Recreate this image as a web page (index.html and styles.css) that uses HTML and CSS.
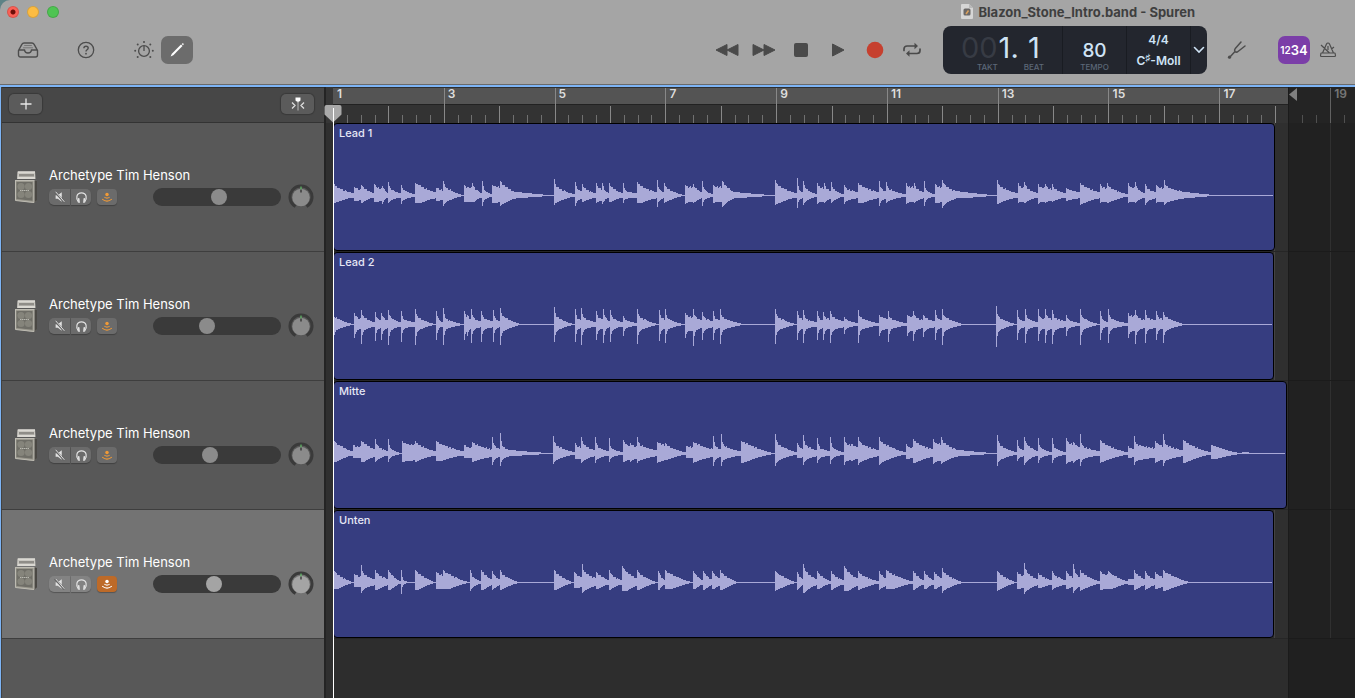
FILE: index.html
```html
<!DOCTYPE html>
<html lang="de">
<head>
<meta charset="utf-8">
<title>Blazon_Stone_Intro.band - Spuren</title>
<link rel="stylesheet" href="styles.css">
</head>
<body>
<svg class="defs" aria-hidden="true">
  <defs>
    <symbol id="amp" viewBox="0 0 24 34">
      <path d="M3.500 1.500h17.500l.5 7.500H3z" fill="#c9c7c1"/>
      <path d="M5 4h15v2.500H5z" fill="#8f8d88"/>
      <path d="M4 2h17M4 8h17" stroke="#eceae4" stroke-width="1"/>
      <path d="M1 10.500l18.500-.5 3.500 1v19.500L20 33 1 30.500z" fill="#9b998f"/>
      <path d="M20 10l3 1v19.500L20 33z" fill="#4a4844"/>
      <path d="M2.500 12h16v18.800l-16-1.800z" fill="#6f6e67"/>
      <circle cx="7" cy="16.500" r="3.600" fill="#85847b"/><circle cx="14.500" cy="16.500" r="3.600" fill="#85847b"/>
      <circle cx="7" cy="24.500" r="3.600" fill="#85847b"/><circle cx="14.500" cy="24.500" r="3.600" fill="#85847b"/>
      <path d="M6 20.500h9" stroke="#b9b8b0" stroke-width="1.200" stroke-dasharray="1.500 .5"/>
      <path d="M1 10.500h19.500M1.500 10v20.500l18.500 2V10.500" fill="none" stroke="#bdbbb2" stroke-width="1"/>
    </symbol>
    <symbol id="mute" viewBox="0 0 16 16">
      <path d="M3 6h2.500L10 2.500v11L5.500 10H3z" fill="#e2e2e2"/>
      <path d="M2 2l11 12" stroke="#666" stroke-width="2.200"/>
      <path d="M3 2l10 11.500" stroke="#e2e2e2" stroke-width="1.100"/>
    </symbol>
    <symbol id="phones" viewBox="0 0 16 16">
      <path d="M4.700 13C1.500 9 2.600 3 8 3s6.500 6 3.300 10" fill="none" stroke="#e2e2e2" stroke-width="1.300"/>
      <path d="M4 8.500l1.800.3.500 4.700-1.600.3zM12 8.500l-1.800.3-.5 4.700 1.600.3z" fill="#e2e2e2"/>
    </symbol>
    <symbol id="monitor" viewBox="0 0 16 16">
      <circle cx="8" cy="5" r="2" fill="currentColor"/>
      <path d="M5 8.200q3 2.200 6 0M2.500 10.500q5.500 4.500 11 0" fill="none" stroke="currentColor" stroke-width="1.200"/>
    </symbol>
    <symbol id="pan" viewBox="0 0 26 26">
      <path d="M7.500 22.500a11 11 0 1 1 11 0" fill="none" stroke="#3a3a3a" stroke-width="3"/>
      <circle cx="13" cy="13.500" r="8.700" fill="currentColor"/>
      <path d="M13 2.500v3" stroke="#62d36b" stroke-width="1"/>
      <path d="M13 5.500v3" stroke="#111" stroke-width="1"/>
    </symbol>
  </defs>
</svg>
<div class="window">
  <header class="top">
    <div class="titlebar">
      <div class="lights">
        <button class="light red" aria-label="Schließen"></button>
        <button class="light yellow" aria-label="Minimieren"></button>
        <button class="light green" aria-label="Vollbild"></button>
      </div>
      <h1 class="title">
        <svg width="12" height="15" viewBox="0 0 12 15"><path d="M1 0h7l4 4v10a1 1 0 0 1-1 1H1a1 1 0 0 1-1-1V1a1 1 0 0 1 1-1z" fill="#d6d6d6"/><path d="M8 0v4h4z" fill="#b9b9b9"/><rect x="2.500" y="4.500" width="7" height="7" rx="1.500" fill="#6b6867"/><path d="M5 10l2.500-3.500" stroke="#d9a05c" stroke-width="1.600"/></svg>
        <span>Blazon_Stone_Intro.band - Spuren</span>
      </h1>
    </div>
    <div class="toolbar">
      <div class="tools">
        <button class="tool library" aria-label="Bibliothek"><svg width="22" height="18" viewBox="0 0 22 18"><path d="M1.500 9.500L5 3.200Q5.600 2 7 2h8q1.400 0 2 1.200l3.500 6.300V14a2 2 0 0 1-2 2h-15a2 2 0 0 1-2-2zM2 9h5.500q.3 3 3.500 3t3.500-3H20" fill="none" stroke="#4d4d4d" stroke-width="1.400"/><path d="M7.200 4.500h7.600M6 6.800h10" stroke="#777" stroke-width="1"/></svg></button>
        <button class="tool help" aria-label="Hilfe"><svg width="18" height="18" viewBox="0 0 18 18"><circle cx="9" cy="9" r="7.700" fill="none" stroke="#4d4d4d" stroke-width="1.300"/><path d="M6.900 7.200c0-2.700 4.300-2.600 4.300-.1 0 1.700-2.200 1.600-2.200 3.300" fill="none" stroke="#4d4d4d" stroke-width="1.400"/><circle cx="9" cy="12.700" r=".9" fill="#4d4d4d"/></svg></button>
        <button class="tool smart" aria-label="Smart Controls"><svg width="20" height="20" viewBox="0 0 20 20"><circle cx="10" cy="11" r="5.400" fill="none" stroke="#4d4d4d" stroke-width="1.300"/><path d="M10 6v5" stroke="#4d4d4d" stroke-width="1.300"/><g fill="#4d4d4d"><circle cx="10" cy="2" r="1"/><circle cx="3.700" cy="4.500" r="1"/><circle cx="16.300" cy="4.500" r="1"/><circle cx="1.200" cy="10.700" r="1"/><circle cx="18.800" cy="10.700" r="1"/><circle cx="3.700" cy="17" r="1"/><circle cx="16.300" cy="17" r="1"/></g></svg></button>
        <button class="tool active" aria-label="Editoren"><svg width="16" height="16" viewBox="0 0 16 16"><path d="M1.600 14.400l1.200-2.600L12 2.600l1.500 1.500-9.200 9.200z" fill="#fff"/><path d="M12.700 1.900l.5-.5q.6-.5 1.200.1t.1 1.200l-.5.500z" fill="#fff"/></svg></button>
      </div>
      <div class="transport">
        <button class="tool" aria-label="Zurückspulen"><svg width="24" height="14" viewBox="0 0 24 14"><path d="M1 7L12 1.500v11zM12 7L23 1.500v11z" fill="#4a4a4a" stroke="#4a4a4a" stroke-linejoin="round"/></svg></button>
        <button class="tool" aria-label="Vorspulen"><svg width="24" height="14" viewBox="0 0 24 14"><path d="M23 7L12 1.500v11zM12 7L1 1.500v11z" fill="#4a4a4a" stroke="#4a4a4a" stroke-linejoin="round"/></svg></button>
        <button class="tool" aria-label="Stopp"><svg width="14" height="14" viewBox="0 0 14 14"><rect width="14" height="14" rx="2" fill="#4a4a4a"/></svg></button>
        <button class="tool" aria-label="Wiedergabe"><svg width="14" height="14" viewBox="0 0 14 14"><path d="M1.500 1v12L13 7z" fill="#4a4a4a" stroke="#4a4a4a" stroke-linejoin="round"/></svg></button>
        <button class="tool" aria-label="Aufnahme"><svg width="18" height="18" viewBox="0 0 18 18"><circle cx="9" cy="9" r="8.300" fill="#c6402f"/></svg></button>
        <button class="tool" aria-label="Cycle"><svg width="20" height="16" viewBox="0 0 20 16"><path d="M2 8.500V7a3 3 0 0 1 3-3h8M18 7v1.500a3 3 0 0 1-3 3H7" fill="none" stroke="#4a4a4a" stroke-width="1.700" stroke-linecap="round"/><path d="M12.500.8v6.400L16 4zM7.500 8.300v6.400L4 11.500z" fill="#4a4a4a"/></svg></button>
      </div>
      <div class="lcd">
        <div class="position">
          <div class="pos"><span class="digits"><span class="dim">00</span>1.</span><span class="cap takt">TAKT</span></div>
          <div class="pos"><span class="digits">1</span><span class="cap">BEAT</span></div>
        </div>
        <div class="tempo"><span class="bpm">80</span><span class="cap">TEMPO</span></div>
        <div class="sig"><span>4/4</span><span>C<sup>♯</sup>-Moll</span></div>
        <button class="more" aria-label="Anzeigemodus"><svg width="12" height="8" viewBox="0 0 12 8"><path d="M1.500 1.500L6 6l4.500-4.500" fill="none" stroke="#cfe3f5" stroke-width="1.600" stroke-linecap="round"/></svg></button>
      </div>
      <div class="extras">
        <button class="tool tuner" aria-label="Stimmgerät"><svg width="20" height="20" viewBox="0 0 20 20"><path d="M2.500 17.500l5.500-6M8 11.500q-1-1.500.3-3L14 2M8 11.500q1.500 1.300 3 0L18 6" fill="none" stroke="#4d4d4d" stroke-width="1.500" stroke-linecap="round"/><circle cx="2.500" cy="17.200" r="1.600" fill="#4d4d4d"/></svg></button>
        <button class="tool countin" aria-label="Einzähler"><small>12</small><span>34</span></button>
        <button class="tool" aria-label="Metronom"><svg width="18" height="18" viewBox="0 0 18 18"><path d="M3.500 12L7.500 3q.5-1 1.500-1t1.500 1l4 9M2 12h14l.5 2.500a1 1 0 0 1-1 1h-13a1 1 0 0 1-1-1zM9 5v4M2 4l8.500 8M12.500 8L15 6" fill="none" stroke="#4d4d4d" stroke-width="1.200" stroke-linejoin="round"/></svg></button>
      </div>
    </div>
  </header>
  <main class="tracks">
    <section class="headers" aria-label="Spuren">
      <div class="headbar">
        <button class="small" aria-label="Spur hinzufügen"><svg width="12" height="12" viewBox="0 0 12 12"><path d="M6 .5v11M.5 6h11" stroke="#e8e8e8" stroke-width="1.300"/></svg></button>
        <button class="small" aria-label="Catch"><svg width="14" height="14" viewBox="0 0 14 14"><path d="M4.500.5h5v3L7 5.500l-2.500-2z" fill="#fff"/><path d="M7 4v9.500" stroke="#bbb" stroke-width="1"/><path d="M1 5.500L4 8.500l-3 3M13 5.500L10 8.500l3 3" fill="none" stroke="#ddd" stroke-width="1.300"/></svg></button>
      </div>
      <div id="track-headers"></div>
    </section>
    <div class="gutter"><div class="gutter-ruler"></div></div>
    <section class="timeline" aria-label="Arrangement">
      <div class="ruler">
        <div class="cycle"></div>
        <svg class="ticks" id="ticks" width="1200" height="36" shape-rendering="crispEdges"></svg>
        <div class="bars"><span>1</span><span>3</span><span>5</span><span>7</span><span>9</span><span>11</span><span>13</span><span>15</span><span>17</span><span class="off">19</span></div>
      </div>
      <div class="lanes" id="lanes"></div>
      <div class="after"><svg width="9" height="13" viewBox="0 0 9 13"><path d="M8 0v13L0 6.500z" fill="#808080"/></svg></div>
    </section>
    <div class="playhead">
      <svg width="18" height="18" viewBox="0 0 18 18"><path d="M2.500 0h13Q17.500 0 17.500 2v7.500L9 17.500.5 9.500V2q0-2 2-2z" fill="#a9a9a9"/></svg>
      <div class="needle"></div>
    </div>
  </main>
</div>
<script src="app.js"></script>
</body>
</html>
```

FILE: styles.css
```css
* { box-sizing: border-box; }
html, body { height: 100%; }
body { margin: 0; background: #5d8286; font-family: Inter, "Liberation Sans", sans-serif; overflow: hidden; }
button { border: 0; padding: 0; margin: 0; background: none; font: inherit; color: inherit; display: flex; align-items: center; justify-content: center; }
svg { display: block; flex: none; }
.defs { position: absolute; width: 0; height: 0; }

.window { height: 100%; display: flex; flex-direction: column; background: #a5a5a5; border-radius: 10px 0 0 0; overflow: hidden; }
.top { border-bottom: 1px solid #6a6a6a; height: 85px; flex: none; }
.titlebar { display: flex; justify-content: space-between; align-items: center; height: 23px; padding: 0 160px 0 7px; }
.lights { display: flex; gap: 8px; padding-top: 1px; }
.light { width: 12px; height: 12px; border-radius: 50%; border: 1px solid #0002; }
.red { background: radial-gradient(circle, #6e0f08 2px, #fb6157 3px); }
.yellow { background: #fcbc43; }
.green { background: #4fc453; }
.title { margin: 0; display: flex; align-items: center; gap: 6px; font-size: 13px; font-weight: 700; color: #3f3f3f; }

.toolbar { display: flex; align-items: center; padding: 3px 11px 0 12px; }
.tools, .transport, .extras { display: flex; align-items: center; }
.tool { width: 32px; height: 28px; border-radius: 7px; flex: none; }
.library { margin-right: 26px; }
.help { margin-right: 26px; }
.smart { margin-right: 1px; }
.active { background: #6c6c6c; }
.transport { margin-left: auto; gap: 1px; margin-right: 13px; }
.transport .tool { width: 36px; }
.extras { margin-left: 14px; }
.tuner { margin-right: 25px; }
.countin { background: #7b3ea8; color: #fff; font-size: 13px; font-weight: 600; margin-right: 2px; }
.countin small { font-size: 10px; }

.lcd { display: grid; grid-template-columns: 119px 64px 64px 17px; height: 48px; border-radius: 8px; background: #23262e; color: #cfe3f5; overflow: hidden; }
.lcd > * + * { border-left: 1px solid #191c22; }
.position { display: flex; gap: 5px; padding: 7px 0 0 18px; }
.pos { display: flex; flex-direction: column; align-items: center; }
.digits { font-size: 29px; line-height: 30px; }
.dim { color: #373b44; margin-right: 1px; }
.cap { font-size: 8px; line-height: 8px; color: #5c6878; font-weight: 500; }
.takt { margin-left: -5px; }
.tempo { display: flex; flex-direction: column; align-items: center; padding-top: 13px; }
.bpm { font-size: 19px; line-height: 24px; font-weight: 500; }
.sig { display: flex; flex-direction: column; align-items: center; font-size: 12px; line-height: 14px; font-weight: 600; gap: 7px; padding-top: 7px; white-space: nowrap; }
.sig sup { font-size: 10px; line-height: 1px; vertical-align: 4px; }

.tracks { position: relative; flex: 1; min-height: 0; display: grid; grid-template-columns: 323px 9px 1fr; border-top: 2px solid #7db4f5; border-left: 1px solid #7db4f5; background: #2d2d2d; }
.headers { background: #585858; border-left: 1px solid #414141; overflow: hidden; }
.headbar { height: 36px; background: #474747; border-bottom: 1px solid #333; border-top: 1px solid #2f2f2f; display: flex; justify-content: space-between; padding: 6px 10px 0 7px; }
.small { width: 33px; height: 20px; border-radius: 5px; background: #5b5b5b; box-shadow: 0 0 1px 1px #0003; }

.track { height: 129px; border-bottom: 1px solid #3e3e3e; display: flex; align-items: flex-start; padding: 44px 10px 0 12px; color: #8b8b8b; }
.track.selected { background: #737373; color: #a4a4a4; }
.track-main { flex: 1; margin: 0 7px 0 11px; }
.name { font-size: 13px; line-height: 16px; font-weight: 400; color: #fff; white-space: nowrap; }
.controls { display: flex; align-items: center; gap: 6px; margin-top: 5px; height: 18px; }
.pair { display: flex; gap: 1px; }
.pair button, .monitor { width: 20px; height: 16px; background: #6b6b6b; box-shadow: 0 1px 1px #0004; }
.selected .pair button { background: #838383; }
.pair button:first-child { width: 21px; border-radius: 5px 0 0 5px; }
.pair button:last-child { border-radius: 0 5px 5px 0; }
.monitor { border-radius: 4px; color: #f09a37; }
.selected .monitor { background: #bd6a28; color: #fff; }
.volume { appearance: none; margin: 0 0 0 auto; width: 128px; height: 18px; border-radius: 9px; background: #3a3a3a; padding: 0 1px; }
.volume::-webkit-slider-thumb { appearance: none; width: 16px; height: 16px; border-radius: 50%; background: #8b8b8b; }
.selected .volume::-webkit-slider-thumb { background: #a4a4a4; }
.pan { margin-top: 17px; }
.amp { margin-top: 3px; }

.gutter { background: #2f2f2f; border-left: 2px solid #242424; }
.gutter-ruler { height: 36px; background: #363636; }
.timeline { position: relative; overflow: hidden; background: #2d2d2d; }
.ruler { position: relative; height: 36px; background: #333; }
.cycle { width: 955px; height: 18px; background: #545454; border-bottom: 1px solid #222; border-top: 1px solid #2f2f2f; }
.ticks { position: absolute; inset: 0 auto auto 0; }
.bars { position: absolute; top: 0; left: 0; width: 1108px; display: grid; grid-template-columns: repeat(10, 1fr); font-size: 12px; line-height: 14px; font-weight: 600; color: #dedede; }
.bars span { padding-left: 4px; }
.bars .off { color: #a5a5a5; }
.lane { height: 129px; border-bottom: 1px solid #262626; background: linear-gradient(#444, #444) 941px 0 / 1px 100% no-repeat, linear-gradient(#444, #444) 997px 0 / 1px 100% no-repeat, #2f2f2f; }
.region { height: 128px; border: 1px solid #000; border-radius: 4px; background: #363d80; position: relative; overflow: hidden; }
.region-name { position: absolute; top: 2px; left: 5px; font-size: 11px; line-height: 14px; font-weight: 500; color: #e6e7f5; }
.after { position: absolute; top: 0; bottom: 0; left: 955px; right: 0; background: #00000048; border-left: 1px solid #1b1b1b; }
.after svg { margin-top: 1px; }
.playhead { position: absolute; left: 323px; top: 18px; bottom: 0; width: 18px; pointer-events: none; }
.needle { position: absolute; left: 9px; top: 3px; bottom: 0; width: 1px; background: #fff; }
```

FILE: app.js
```js
// Each hit: x, spike up, spike down, body height, height reached before the next hit.
const tracks = [
  { name: "Lead 1", width: 942, volume: 52, hits: "0,11,7,9,2 20,8,5,8,5 27,10,7,9,2 40,11,6,9,6 48,9,8,8,2 54,13,7,7,2 67,10,8,6,1 81,12,7,12,3 102,7,5,7,5 109,14,10,9,0 130,10,6,8,7 138,12,6,9,2 148,14,10,6,1 158,10,7,9,8 166,14,10,12,3 183,3,2,3,0 220,16,9,9,1 241,13,10,7,4 248,11,6,8,2 262,12,7,8,6 268,12,8,8,2 275,12,6,9,2 289,12,7,4,2 303,13,7,11,3 323,15,11,6,3 330,12,7,8,0 351,10,8,8,8 359,11,7,9,3 368,14,10,6,1 379,10,7,8,8 388,14,11,13,3 401,3,2,3,0 441,15,9,11,2 463,17,12,5,3 469,14,9,8,1 483,12,8,8,7 490,12,7,8,4 497,13,7,7,1 510,10,8,7,3 524,12,7,11,3 545,14,10,7,4 552,13,7,7,1 572,12,8,8,8 580,12,7,8,3 590,14,10,5,1 601,11,7,9,8 608,15,12,12,4 622,4,2,4,0 663,15,8,10,2 684,12,7,8,7 690,13,7,9,2 704,11,8,8,7 711,11,7,8,6 718,11,6,7,2 732,7,5,6,3 746,12,9,11,3 766,11,7,8,7 773,12,7,9,1 794,12,7,8,7 801,13,7,8,2 811,11,9,8,3 822,10,7,8,7 830,15,9,9,3 852,3,2,3,0 884,0,0,0,0" },
  { name: "Lead 2", width: 941, volume: 41, hits: "0,7,10,7,0 20,11,13,9,5 27,14,19,8,2 41,12,16,6,4 47,11,15,8,4 54,14,20,8,2 67,13,17,5,2 81,15,20,8,0 102,13,15,6,2 109,16,20,6,0 130,13,15,9,7 133,9,11,9,5 137,15,18,7,3 147,13,17,7,3 159,14,17,5,3 166,16,20,9,0 188,0,0,0,0 220,17,17,8,0 241,15,17,6,4 247,16,20,7,2 262,13,15,7,5 269,15,18,8,3 276,14,17,7,2 289,8,11,5,1 303,15,19,8,0 325,14,16,6,5 331,15,18,6,0 351,11,13,8,7 359,15,21,8,4 368,12,15,7,3 379,13,15,5,4 386,15,19,7,0 411,0,0,0,0 441,15,19,8,0 463,13,15,6,5 469,14,18,6,2 483,13,15,6,4 489,12,15,7,5 496,13,18,8,3 510,7,9,5,1 524,14,18,7,1 545,9,11,8,5 554,13,17,6,1 573,9,11,8,7 579,13,16,8,4 589,9,12,7,3 601,14,15,6,4 608,15,20,8,0 631,0,0,0,0 662,18,22,8,0 683,14,15,5,3 691,15,18,6,2 704,15,16,6,5 711,15,18,7,5 718,14,19,7,3 732,9,11,5,1 746,15,20,7,0 766,13,15,6,2 774,15,18,6,1 794,11,13,8,8 801,14,19,8,4 811,14,18,6,4 822,13,15,7,5 829,12,18,8,0 852,0,0,0,0" },
  { name: "Mitte", width: 954, volume: 44, hits: "0,12,8,11,2 19,8,4,7,6 27,12,8,12,4 41,14,8,9,2 54,14,8,5,0 68,12,8,10,8 81,12,8,10,2 102,12,7,11,2 130,8,4,7,5 138,11,8,10,4 158,16,11,9,4 166,20,12,8,3 176,3,2,3,0 219,17,10,9,1 241,10,5,6,6 247,16,9,10,3 261,16,9,7,2 275,15,8,5,1 289,13,8,11,7 296,10,8,9,6 303,16,9,9,3 323,11,9,11,8 331,10,6,8,1 352,7,4,6,6 359,11,9,11,4 379,17,12,8,4 387,19,12,8,2 407,12,9,12,0 441,19,12,10,1 463,10,4,8,4 469,18,11,9,3 483,15,9,6,2 496,16,10,6,1 510,16,11,9,8 517,9,7,9,6 524,16,11,11,3 545,16,11,12,1 572,9,5,7,5 579,14,9,12,4 599,14,10,10,9 607,16,10,12,3 625,3,2,3,0 663,18,12,9,1 683,13,7,5,3 690,16,11,11,2 704,15,9,6,1 718,15,9,6,1 732,15,10,11,9 739,11,9,10,6 746,19,12,7,2 766,13,9,11,1 794,7,4,6,4 800,17,11,9,5 821,12,9,11,7 829,19,12,9,3 849,13,9,12,1 877,8,5,8,0 908,1,0,1,0 926,0,0,0,0" },
  { name: "Unten", width: 941, volume: 47, selected: true, hits: "0,11,6,10,0 20,8,4,8,5 27,17,10,9,3 41,12,7,10,3 54,12,7,11,1 67,12,11,1,0 81,12,7,11,0 102,10,6,9,7 109,12,6,11,0 136,12,8,7,1 147,12,7,11,3 158,11,7,9,3 166,12,7,9,0 186,0,0,0,0 220,12,7,10,0 240,10,5,9,5 248,18,10,11,4 262,10,6,9,2 275,12,7,9,2 288,16,8,14,4 303,12,7,10,0 324,11,7,10,2 331,12,6,11,0 359,11,6,10,2 369,11,7,10,3 378,11,6,9,4 386,12,7,10,0 405,0,0,0,0 441,11,8,10,0 463,10,7,9,3 469,18,10,13,3 483,11,6,9,1 497,11,7,9,2 510,16,8,14,4 524,11,7,9,1 545,11,7,9,4 552,12,6,11,1 579,11,7,10,2 590,11,6,9,2 600,10,6,9,4 608,14,10,10,0 630,0,0,0,0 663,11,8,10,0 683,10,6,10,6 690,19,11,12,3 704,9,5,8,2 718,11,7,8,2 732,11,6,9,5 739,18,10,11,5 746,12,8,10,1 766,11,7,9,7 774,11,6,10,1 794,3,2,3,3 800,12,7,10,3 811,11,7,9,3 821,10,6,9,5 829,12,8,11,0 857,0,0,0,0" }
];

function wavePath(text, width) {
  const hits = text.split(" ").map(h => h.split(",").map(Number));
  const centre = 71;
  let d = "";
  hits.forEach(([x, up, down, body, end], i) => {
    const next = i + 1 < hits.length ? hits[i + 1][0] : width - 3;
    for (let px = x; px < next; px++) {
      const k = px - x;
      const t = k / Math.max(1, next - x - 1);
      const level = end + (body - end) * Math.pow(1 - t, 1.4);
      const ripple = level > 4 ? ((px * 7) % 3) - 1 : 0;
      const spike = k ? Math.pow(0.35, k) : 1;
      const a = Math.round(level + Math.max(0, up - body) * spike + (k ? ripple * 0.6 : 0));
      const low = Math.min(down, level * 0.8);
      const b = Math.round(low + Math.max(0, down - Math.min(down, body * 0.8)) * spike);
      d += `M${px} ${centre - a}h1v${a + b + 1}h-1z`;
    }
  });
  return d;
}

document.getElementById("track-headers").innerHTML = tracks.map((t, i) => `
  <div class="track${t.selected ? " selected" : ""}">
    <svg class="amp" width="24" height="34"><use href="#amp"/></svg>
    <div class="track-main">
      <div class="name">Archetype Tim Henson</div>
      <div class="controls">
        <div class="pair">
          <button aria-label="Stumm"><svg width="14" height="14"><use href="#mute"/></svg></button>
          <button aria-label="Solo"><svg width="15" height="15"><use href="#phones"/></svg></button>
        </div>
        <button class="monitor" aria-label="Monitoring"><svg width="14" height="14"><use href="#monitor"/></svg></button>
        <input class="volume" id="volume-${i}" type="range" aria-label="Lautstärke ${t.name}" value="${t.volume}">
      </div>
    </div>
    <svg class="pan" width="26" height="26"><use href="#pan"/></svg>
  </div>`).join("");

document.getElementById("lanes").innerHTML = tracks.map(t => `
  <div class="lane">
    <div class="region" style="width:${t.width}px">
      <svg width="${t.width - 2}" height="126" shape-rendering="crispEdges"><path d="${wavePath(t.hits, t.width)}" fill="#a9a9d7"/></svg>
      <span class="region-name">${t.name}</span>
    </div>
  </div>`).join("");

let ticks = "";
for (let beat = 1; beat < 84; beat++) {
  const x = Math.round(beat * 997 / 72);
  const top = beat % 8 === 0 ? 1 : beat % 4 === 0 ? 19 : 28;
  ticks += `<path d="M${x} ${top}h1V36h-1z" fill="${beat % 4 ? "#707070" : "#888"}"/>`;
}
document.getElementById("ticks").innerHTML = ticks;
```
